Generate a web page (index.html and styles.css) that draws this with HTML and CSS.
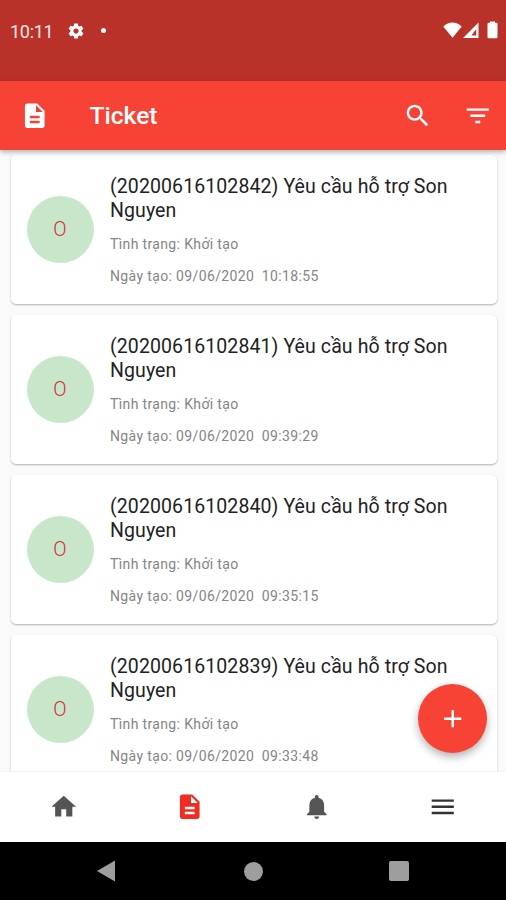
FILE: index.html
```html
<!DOCTYPE html>
<html lang="vi">
<head>
<meta charset="utf-8">
<title>Ticket</title>
<link rel="stylesheet" href="styles.css">
</head>
<body>
<svg width="0" height="0" class="defs">
  <symbol id="doc" viewBox="0 0 24 24"><path d="M14 2H6c-1.100 0-2 .9-2 2v16c0 1.100.9 2 2 2h12c1.100 0 2-.9 2-2V8l-6-6zm2 16H8v-2h8v2zm0-4H8v-2h8v2zm-3-5V3.500L18.500 9H13z"/></symbol>
</svg>
<div class="screen">
  <header class="status">
    <span class="clock">10:11</span>
    <svg class="gear" viewBox="0 0 24 24"><path d="M19.430 12.980c.04-.32.070-.64.070-.98s-.03-.66-.07-.98l2.110-1.650c.19-.15.240-.42.120-.64l-2-3.460c-.12-.22-.39-.3-.61-.22l-2.490 1c-.52-.4-1.080-.73-1.690-.98l-.38-2.650C14.460 2.180 14.250 2 14 2h-4c-.25 0-.46.180-.49.420l-.38 2.650c-.61.250-1.170.590-1.690.980l-2.490-1c-.23-.09-.49 0-.61.220l-2 3.460c-.13.220-.07.490.120.640l2.110 1.650c-.04.320-.07.650-.07.980s.030.660.070.980l-2.110 1.650c-.19.150-.24.420-.12.640l2 3.460c.12.220.390.300.610.220l2.490-1c.52.400 1.080.730 1.690.980l.38 2.650c.03.240.240.420.490.420h4c.25 0 .46-.18.490-.42l.38-2.650c.61-.25 1.170-.59 1.690-.98l2.490 1c.23.090.490 0 .61-.22l2-3.460c.12-.22.070-.49-.12-.64l-2.110-1.650zM12 15.500c-1.930 0-3.500-1.570-3.500-3.500s1.570-3.500 3.500-3.500 3.500 1.570 3.500 3.500-1.570 3.500-3.500 3.500z"/></svg>
    <span class="dot"></span>
    <div class="signals">
      <svg width="19" height="16" viewBox="0 0 19 16"><path d="M.3 4.500Q4.500.4 9.500.4t9.200 4.100L9.500 15.700z"/></svg>
      <svg width="16" height="16" viewBox="0 0 16 16"><path fill-rule="evenodd" d="M0 16 15.500.5V16zM8.500 13.500h4.700V7z"/></svg>
      <svg class="battery" width="11" height="18" viewBox="0 0 11 18"><path d="M3 1.800V.5h5v1.300h1.300q1.200 0 1.200 1.200v13q0 1.200-1.200 1.200H1.700Q.5 17.200.5 16V3q0-1.200 1.200-1.200z"/></svg>
    </div>
  </header>
  <div class="appbar">
    <svg class="icon"><use href="#doc"/></svg>
    <h1>Ticket</h1>
    <svg class="icon search" viewBox="0 0 24 24"><path d="M15.500 14h-.79l-.28-.27C15.410 12.590 16 11.110 16 9.500 16 5.910 13.090 3 9.500 3S3 5.910 3 9.500 5.910 16 9.500 16c1.610 0 3.090-.59 4.230-1.570l.27.280v.79l5 4.990L20.490 19l-4.990-5zm-6 0C7.010 14 5 11.990 5 9.500S7.010 5 9.500 5 14 7.010 14 9.500 11.990 14 9.500 14z"/></svg>
    <svg class="icon" viewBox="0 0 24 24"><path d="M10 18h4v-2h-4v2zM3 6v2h18V6H3zm3 7h12v-2H6v2z"/></svg>
  </div>
  <main class="list">
    <article class="card"><div class="avatar">O</div><div class="text"><h2>(20200616102842) Yêu cầu hỗ trợ Son Nguyen</h2><p>Tình trạng: Khởi tạo</p><p class="date">Ngày tạo: 09/06/2020&nbsp; 10:18:55</p></div></article>
    <article class="card"><div class="avatar">O</div><div class="text"><h2>(20200616102841) Yêu cầu hỗ trợ Son Nguyen</h2><p>Tình trạng: Khởi tạo</p><p class="date">Ngày tạo: 09/06/2020&nbsp; 09:39:29</p></div></article>
    <article class="card"><div class="avatar">O</div><div class="text"><h2>(20200616102840) Yêu cầu hỗ trợ Son Nguyen</h2><p>Tình trạng: Khởi tạo</p><p class="date">Ngày tạo: 09/06/2020&nbsp; 09:35:15</p></div></article>
    <article class="card"><div class="avatar">O</div><div class="text"><h2>(20200616102839) Yêu cầu hỗ trợ Son Nguyen</h2><p>Tình trạng: Khởi tạo</p><p class="date">Ngày tạo: 09/06/2020&nbsp; 09:33:48</p></div></article>
  </main>
  <nav class="tabs">
    <svg class="icon" viewBox="0 0 24 24"><path d="M10 20v-6h4v6h5v-8h3L12 3 2 12h3v8z"/></svg>
    <svg class="icon active"><use href="#doc"/></svg>
    <svg class="icon" viewBox="0 0 24 24"><path d="M12 22c1.100 0 2-.9 2-2h-4c0 1.100.890 2 2 2zm6-6v-5c0-3.070-1.640-5.640-4.500-6.320V4c0-.83-.67-1.500-1.500-1.500s-1.500.67-1.500 1.500v.680C7.630 5.360 6 7.920 6 11v5l-2 2v1h16v-1l-2-2z"/></svg>
    <svg class="icon menu" viewBox="0 0 24 24"><path d="M3 18h18v-2H3v2zm0-5h18v-2H3v2zm0-7v2h18V6H3z"/></svg>
  </nav>
  <footer class="system">
    <svg width="18" height="22" viewBox="0 0 18 22"><path d="M0 11 18 .5v21z"/></svg>
    <span class="circle"></span>
    <span class="square"></span>
  </footer>
  <div class="fab"><svg class="icon" viewBox="0 0 24 24"><path d="M19 13h-6v6h-2v-6H5v-2h6V5h2v6h6v2z"/></svg></div>
</div>
</body>
</html>
```

FILE: styles.css
```css
* { box-sizing: border-box; }
body { margin: 0; font-family: Roboto, "Liberation Sans", sans-serif; }
h1, h2, p { margin: 0; font-weight: 400; }
svg { display: block; fill: currentColor; flex: none; }
.defs { position: absolute; }
.screen { position: relative; width: 506px; height: 900px; overflow: hidden; display: flex; flex-direction: column; background: #fafafa; }
.icon { width: 29.5px; height: 29.5px; }

.status { height: 81px; flex: none; display: flex; align-items: flex-start; padding: 20px 8px 0 10px; background: #b8322a; color: #fff; }
.clock { width: 57px; font-size: 18px; line-height: 23px; letter-spacing: -0.3px; color: #fde8e6; }
.gear { width: 18px; height: 18px; margin-top: 2px; }
.dot { width: 5px; height: 5px; margin: 8px 0 0 16px; border-radius: 50%; background: #fff; }
.signals { display: flex; align-items: flex-start; margin: 2px 0 0 auto; gap: 1px; }
.signals .battery { margin-left: 7px; margin-top: -1px; }

.appbar { height: 68.5px; flex: none; display: flex; align-items: center; padding: 0 14px 0 20px; background: #f64336; color: #fff; box-shadow: 0 2px 5px rgba(0,0,0,.3); z-index: 1; }
.appbar h1 { flex: 1; margin-left: 40px; font-size: 24.6px; font-weight: 500; line-height: 30px; padding-top: 2px; letter-spacing: 0; }
.search { margin-right: 30px; }

.list { flex: 1; min-height: 0; overflow: hidden; display: flex; flex-direction: column; gap: 11px; padding: 5.5px 9.5px 0 10.5px; }
.card { height: 149px; flex: none; display: flex; padding: 0 16px; background: #fff; border-radius: 5px; box-shadow: 0 1px 2px rgba(0,0,0,.3); }
.avatar { width: 67px; height: 67px; margin-top: 41px; border-radius: 50%; display: flex; align-items: center; justify-content: center; background: #c8e6c9; color: #d32f2f; font-size: 19.7px; font-weight: 300; }
.text { flex: 1; margin: 20px 0 0 16.5px; }
.text h2 { font-size: 19.5px; line-height: 24px; color: #222; letter-spacing: 0.1px; }
.text p { margin-top: 13px; font-size: 14px; line-height: 19px; color: #858585; letter-spacing: 0.36px; }
.text h2 + p { margin-top: 12px; }

.tabs { height: 71px; flex: none; display: grid; grid-template-columns: repeat(4, 1fr); align-items: center; justify-items: center; background: #fff; color: #555; border-top: 1px solid #f3f3f3; z-index: 1; }
.tabs .active { color: #f02b20; }
.tabs .menu { color: #333; }

.system { height: 58px; flex: none; display: flex; align-items: center; justify-content: space-between; padding: 0 97px; background: #000; color: #9e9e9e; }
.circle { width: 19px; height: 19px; margin-left: 2px; border-radius: 50%; background: #9e9e9e; }
.square { width: 20px; height: 20px; border-radius: 2px; background: #9e9e9e; }

.fab { position: absolute; left: 418px; top: 684px; width: 69px; height: 69px; border-radius: 50%; display: flex; align-items: center; justify-content: center; background: #f64336; color: #fff; box-shadow: 0 4px 8px rgba(0,0,0,.3); z-index: 2; }
```
